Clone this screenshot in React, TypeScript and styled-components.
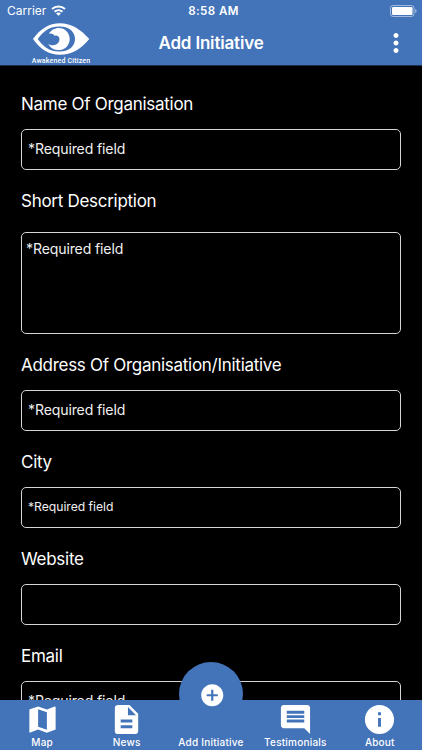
import React from 'react';
import styled, { createGlobalStyle } from 'styled-components';
import { MdMap, MdDescription, MdComment, MdInfo, MdAddCircle, MdMoreVert } from 'react-icons/md';

const BLUE = '#4373b9';

const GlobalStyle = createGlobalStyle`
  *, *::before, *::after { box-sizing: border-box; }
  body { margin: 0; background: #000; }
`;

const Screen = styled.div`
  width: 422px;
  height: 750px;
  display: flex;
  flex-direction: column;
  overflow: hidden;
  background: #000;
  color: #fff;
  font-family: Inter, 'Liberation Sans', sans-serif;
`;

const Header = styled.header`
  flex: none;
  height: 66px;
  background: ${BLUE};
  border-bottom: 1px solid #1c2f4b;
`;

const StatusBar = styled.div`
  height: 22px;
  display: grid;
  grid-template-columns: 1fr auto 1fr;
  align-items: center;
  padding: 0 5px 0 7px;
`;

const Carrier = styled.div`
  display: flex;
  align-items: center;
  gap: 5px;
  font-size: 12px;
  line-height: 22px;

  svg {
    margin-bottom: 1px;
  }
`;

const Time = styled.div`
  font-size: 11.6px;
  font-weight: 600;
  line-height: 22px;
  letter-spacing: 0.4px;
  padding-left: 3px;
`;

const BatterySlot = styled.div`
  display: flex;
  justify-content: flex-end;
`;

const TitleBar = styled.div`
  height: 43px;
  display: grid;
  grid-template-columns: 122px 1fr 122px;
  grid-template-rows: 43px;
  align-items: center;
`;

const Brand = styled.div`
  align-self: start;
  display: flex;
  flex-direction: column;
  align-items: center;
  width: 60px;
  margin: 1px 0 0 31px;
`;

const BrandName = styled.span`
  font-family: Roboto, sans-serif;
  font-size: 7px;
  font-weight: 500;
  line-height: 9px;
  letter-spacing: 0.18px;
  white-space: nowrap;
  margin-top: 1px;
`;

const Title = styled.h1`
  margin: 0;
  text-align: center;
  font-size: 17px;
  font-weight: 600;
  letter-spacing: -0.18px;
  line-height: 43px;
`;

const MenuButton = styled.button`
  justify-self: end;
  display: flex;
  margin: 0 11px 1px 0;
  padding: 0;
  border: 0;
  background: none;
  color: #fff;
`;

const Form = styled.main`
  flex: 1;
  min-height: 0;
  overflow: hidden;
  padding: 26px 21px 0;
  display: flex;
  flex-direction: column;
  gap: 19px;
`;

const Field = styled.label<{ $tall?: boolean }>`
  flex: none;
  display: flex;
  flex-direction: column;
  gap: ${(p) => (p.$tall ? 19 : 13)}px;
`;

const Label = styled.span`
  font-size: 17px;
  line-height: 24px;
  letter-spacing: -0.28px;
`;

const Box = styled.span<{ $tall?: boolean; $small?: boolean }>`
  display: flex;
  align-items: ${(p) => (p.$tall ? 'flex-start' : 'center')};
  height: ${(p) => (p.$tall ? 102 : 41)}px;
  padding: ${(p) => (p.$tall ? '6px 4px' : '0 6px 2px')};
  border: 1px solid #d4d4d4;
  border-radius: 5px;
  font-size: ${(p) => (p.$small ? 12.2 : 14.1)}px;
  line-height: 20px;
  letter-spacing: ${(p) => (p.$small ? -0.03 : -0.14)}px;
  color: #f0f0f0;
`;

const TabBar = styled.nav`
  position: relative;
  flex: none;
  height: 50px;
  display: grid;
  grid-template-columns: repeat(5, 1fr);
  background: ${BLUE};
`;

const Tab = styled.button`
  display: flex;
  flex-direction: column;
  align-items: center;
  justify-content: flex-end;
  padding: 0 0 2px;
  border: 0;
  background: none;
  color: #fff;
  font-family: inherit;

  svg {
    margin-bottom: -1px;
  }
`;

const TabLabel = styled.span`
  font-size: 10px;
  font-weight: 500;
  line-height: 12px;
  letter-spacing: 0.22px;
  white-space: nowrap;
`;

const AddButton = styled.span`
  position: absolute;
  left: 50%;
  top: -38px;
  width: 64px;
  height: 64px;
  margin-left: -32px;
  display: flex;
  align-items: center;
  justify-content: center;
  border-radius: 50%;
  background: ${BLUE};
  padding: 2px 0 0 2px;
`;

const fields = [
  { label: 'Name Of Organisation', hint: '*Required field' },
  { label: 'Short Description', hint: '*Required field', tall: true },
  { label: 'Address Of Organisation/Initiative', hint: '*Required field' },
  { label: 'City', hint: '*Required field', small: true },
  { label: 'Website', hint: '' },
  { label: 'Email', hint: '*Required field' },
];

const WifiIcon = () => (
  <svg width="15" height="11" viewBox="0 0 15 11" fill="none" stroke="#fff" strokeWidth="2">
    <path d="M1 4.1C4.7.7 10.3.7 14 4.1M3.5 6.7c2.3-2.1 5.7-2.1 8 0" />
    <path d="M7.5 10.8 5.1 8.5c1.4-1.2 3.4-1.2 4.8 0z" fill="#fff" stroke="none" />
  </svg>
);

const BatteryIcon = () => (
  <svg width="27" height="12" viewBox="0 0 27 12">
    <rect x=".5" y=".5" width="23.5" height="11" rx="2.6" fill="none" stroke="#fff" strokeOpacity=".5" />
    <rect x="2" y="2" width="20.5" height="8" rx="1.2" fill="#fff" />
    <path d="M25.2 4v4c.9-.3 1.4-1.1 1.4-2s-.5-1.7-1.4-2z" fill="#fff" fillOpacity=".5" />
  </svg>
);

const EyeLogo = () => (
  <svg width="58" height="33" viewBox="0 0 58 33">
    <path
      fill="#fff"
      fillRule="evenodd"
      d="M1 16C8 6 17 .2 28 .2c11.500 0 21 6.300 29.300 15.800C49 26 39.500 31.800 28 31.800 17 31.800 8 26 1 16zM5.800 16C10 22 16 28.500 27.500 28.500c10.500 0 15.500-6 15.500-12.500S38 3.500 27.500 3.500C16 3.500 10 10 5.800 16z"
    />
    <path
      fill="#fff"
      d="M16.800 10.800C18.800 7.100 22.600 4.900 26.800 4.900c6.200 0 10.900 4.800 10.900 11s-4.800 11.200-10.900 11.200c-4.600 0-8.600-2.400-10.500-6.200 2.300 1.500 5.600 1.700 7.900.5 3-1.600 3.900-4.600 2.900-7-.8-1.700-2.700-2.500-4.700-1.600-.9-1.900-3.200-2.700-5.600-2z"
    />
  </svg>
);

export default function App() {
  return (
    <Screen>
      <GlobalStyle />
      <Header>
        <StatusBar>
          <Carrier>
            Carrier
            <WifiIcon />
          </Carrier>
          <Time>8:58 AM</Time>
          <BatterySlot>
            <BatteryIcon />
          </BatterySlot>
        </StatusBar>
        <TitleBar>
          <Brand>
            <EyeLogo />
            <BrandName>Awakened Citizen</BrandName>
          </Brand>
          <Title>Add Initiative</Title>
          <MenuButton aria-label="More options">
            <MdMoreVert size={30} />
          </MenuButton>
        </TitleBar>
      </Header>
      <Form>
        {fields.map((f) => (
          <Field key={f.label} $tall={f.tall}>
            <Label>{f.label}</Label>
            <Box $tall={f.tall} $small={f.small}>
              {f.hint}
            </Box>
          </Field>
        ))}
      </Form>
      <TabBar>
        <AddButton>
          <MdAddCircle size={26.5} />
        </AddButton>
        <Tab>
          <MdMap size={35} />
          <TabLabel>Map</TabLabel>
        </Tab>
        <Tab>
          <MdDescription size={35} />
          <TabLabel>News</TabLabel>
        </Tab>
        <Tab>
          <TabLabel>Add Initiative</TabLabel>
        </Tab>
        <Tab>
          <MdComment size={35} />
          <TabLabel>Testimonials</TabLabel>
        </Tab>
        <Tab>
          <MdInfo size={35} />
          <TabLabel>About</TabLabel>
        </Tab>
      </TabBar>
    </Screen>
  );
}
